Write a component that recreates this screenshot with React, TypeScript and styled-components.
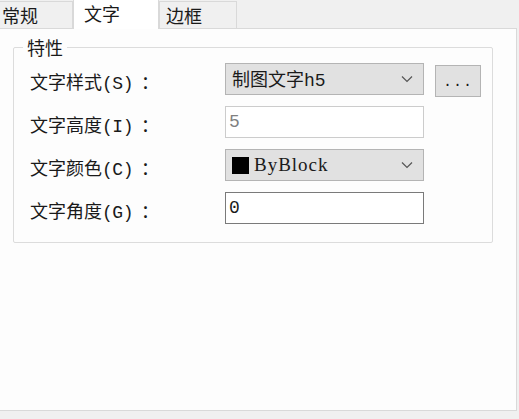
import styled, { createGlobalStyle } from "styled-components"

const GlobalStyle = createGlobalStyle`
   html, body {
      margin: 0;
      padding: 0;
      background: #f0f0f0;
      font-family: "Noto Sans CJK SC", "Liberation Sans", sans-serif;
      color: #1a1a1a;
   }
`

const tabs = ["常规", "文字", "边框"]

interface Row {
   name: string
   hotkey: string
   kind: "combo" | "input" | "color" | "disabled"
   value: string
}

const rows: Row[] = [
   { name: "文字样式", hotkey: "S", kind: "combo", value: "制图文字h5" },
   { name: "文字高度", hotkey: "I", kind: "disabled", value: "5" },
   { name: "文字颜色", hotkey: "C", kind: "color", value: "ByBlock" },
   { name: "文字角度", hotkey: "G", kind: "input", value: "0" },
]

// wrap ascii runs so they get the serif mono face like the win32 dialog
const Mixed = ({ text }: { text: string }) => (
   <>
      {text.split(/([\x20-\x7e]+)/).map((part, i) =>
         /^[\x20-\x7e]+$/.test(part) ? <ValueLatin key={i}>{part}</ValueLatin> : part
      )}
   </>
)

const Chevron = () => (
   <svg width="12" height="8" viewBox="0 0 12 8">
      <path d="M1 1.5 L6 6.5 L11 1.5" fill="none" stroke="#555" strokeWidth="1.2" />
   </svg>
)

export default function App() {
   return (
      <Window>
         <GlobalStyle />
         <TabStrip>
            {tabs.map((t, i) => (
               <Tab key={t} active={i === 1} first={i === 0}>
                  {t}
               </Tab>
            ))}
         </TabStrip>
         <Panel>
            <Group>
               <Legend>特性</Legend>
               <Rows>
                  {rows.map((r) => (
                     <FieldRow key={r.name}>
                        <Label>
                           {r.name}
                           <Latin>({r.hotkey})</Latin>
                           <Colon>：</Colon>
                        </Label>
                        {r.kind === "combo" && (
                           <>
                              <Combo>
                                 <ValueText>
                                    <Mixed text={r.value} />
                                 </ValueText>
                                 <Chevron />
                              </Combo>
                              <DotsButton>...</DotsButton>
                           </>
                        )}
                        {r.kind === "color" && (
                           <Combo>
                              <ColorText>
                                 <Swatch />
                                 <BigLatin>{r.value}</BigLatin>
                              </ColorText>
                              <Chevron />
                           </Combo>
                        )}
                        {(r.kind === "input" || r.kind === "disabled") && (
                           <TextBox disabled={r.kind === "disabled"}>
                              <ValueLatin>{r.value}</ValueLatin>
                           </TextBox>
                        )}
                     </FieldRow>
                  ))}
               </Rows>
            </Group>
         </Panel>
      </Window>
   )
}

// Styled Components

const Window = styled.div`
   width: 519px;
   height: 419px;
   background: #f0f0f0;
   display: flex;
   flex-direction: column;
   overflow: hidden;
`

const TabStrip = styled.div`
   display: flex;
   height: 29px;
   align-items: flex-end;
   margin-bottom: -1px;
   position: relative;
   z-index: 1;
`

const Tab = styled.div<{ active: boolean; first: boolean }>`
   box-sizing: border-box;
   height: ${({ active }) => (active ? "30px" : "28px")};
   width: ${({ active, first }) => (active ? "86px" : first ? "73px" : "78px")};
   padding-left: ${({ active, first }) => (first ? "2px" : active ? "10px" : "6px")};
   margin-top: ${({ active }) => (active ? "-1px" : "0")};
   background: ${({ active }) => (active ? "#ffffff" : "#f0f0f0")};
   border: 1px solid #d9d9d9;
   border-left: ${({ first }) => (first ? "none" : "1px solid #d9d9d9")};
   border-bottom: ${({ active }) => (active ? "none" : "1px solid #d9d9d9")};
   font-size: 18px;
   line-height: 26px;
   color: #1a1a1a;
   align-self: ${({ active }) => (active ? "stretch" : "flex-end")};
`

const Panel = styled.div`
   box-sizing: border-box;
   width: 517px;
   height: 383px;
   background: #fdfdfd;
   border: 1px solid #d9d9d9;
   border-left: none;
   padding: 18px 24px 0 13px;
`

const Group = styled.div`
   position: relative;
   box-sizing: border-box;
   width: 480px;
   height: 196px;
   border: 1px solid #dcdcdc;
   border-radius: 2px;
   padding: 15px 0 0 16px;
`

const Legend = styled.span`
   position: absolute;
   top: -13px;
   left: 9px;
   padding: 0 4px;
   background: #fdfdfd;
   font-size: 18px;
   line-height: 24px;
`

const Rows = styled.div`
   display: flex;
   flex-direction: column;
   gap: 11px;
`

const FieldRow = styled.div`
   display: flex;
   align-items: center;
   height: 32px;
`

const Label = styled.span`
   width: 195px;
   display: flex;
   align-items: baseline;
   font-size: 18px;
   padding-top: 3px;
   color: #1a1a1a;
`

const Latin = styled.span`
   font-family: "Liberation Mono", monospace;
   font-size: 18px;
   letter-spacing: -0.5px;
`

const ValueLatin = styled.span`
   font-family: "Liberation Mono", monospace;
   font-size: 18px;
`

const BigLatin = styled.span`
   font-family: "Liberation Serif", serif;
   font-size: 19px;
   letter-spacing: 1px;
`

const Colon = styled.span`
   margin-left: 8px;
   font-size: 18px;
`

const Combo = styled.div`
   box-sizing: border-box;
   width: 199px;
   height: 32px;
   display: flex;
   align-items: center;
   justify-content: space-between;
   padding: 0 10px 0 6px;
   background: #e1e1e1;
   border: 1px solid #b4b4b4;
`

const ValueText = styled.span`
   font-size: 18px;
   line-height: 24px;
   color: #1a1a1a;
   white-space: nowrap;
`

const ColorText = styled.span`
   display: flex;
   align-items: center;
   gap: 5px;
   color: #1a1a1a;
`

const Swatch = styled.span`
   display: inline-block;
   width: 17px;
   height: 17px;
   background: #000;
`

const DotsButton = styled.div`
   box-sizing: border-box;
   margin-left: 11px;
   width: 46px;
   height: 32px;
   margin-top: 3px;
   background: #e1e1e1;
   border: 1px solid #b4b4b4;
   font-family: "Liberation Mono", monospace;
   font-size: 15px;
   letter-spacing: 1px;
   display: flex;
   align-items: center;
   justify-content: center;
   padding-top: 4px;
`

const TextBox = styled.div<{ disabled: boolean }>`
   box-sizing: border-box;
   width: 199px;
   height: 32px;
   display: flex;
   align-items: center;
   padding-left: 3px;
   background: #fff;
   border: 1px solid ${({ disabled }) => (disabled ? "#cccccc" : "#7a7a7a")};
   color: ${({ disabled }) => (disabled ? "#808080" : "#1a1a1a")};
`
